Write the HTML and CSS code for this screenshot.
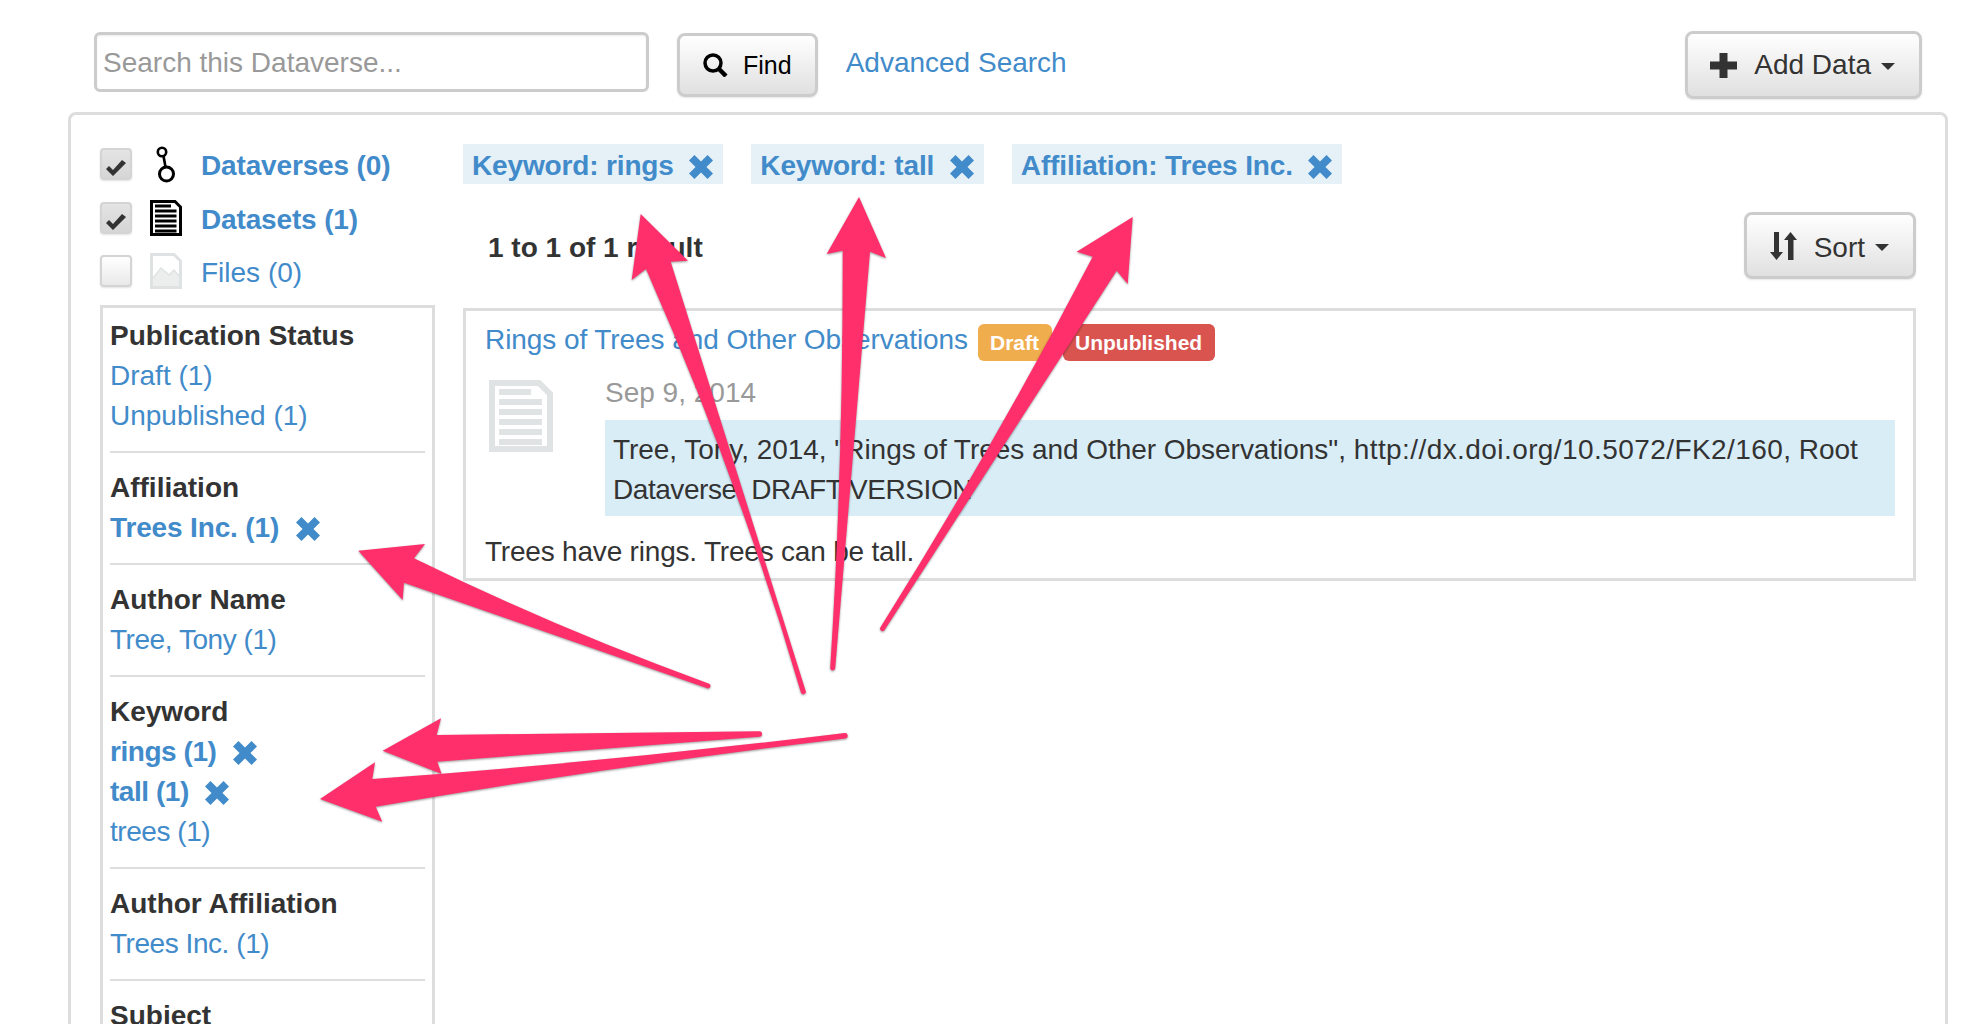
FILE: index.html
```html
<!DOCTYPE html>
<html lang="en">
<head>
  <meta charset="UTF-8">
  <meta name="viewport" content="width=device-width, initial-scale=1.0">
  <title>Root Dataverse</title>
  <link rel="stylesheet" href="styles.css">
</head>
<body>
  <svg class="icon-defs">
    <symbol id="icon-remove" viewBox="1 1 22 22">
      <path d="M6 1 L12 7 18 1 23 6 17 12 23 18 18 23 12 17 6 23 1 18 7 12 1 6Z"/>
    </symbol>
    <symbol id="icon-check" viewBox="0 0 20 16">
      <path d="M0 9 L3 6 7 10 16 0 20 3 7 16Z"/>
    </symbol>
    <symbol id="icon-doc" viewBox="0 0 64 72">
      <path d="M3 3 H50 L61 14 V69 H3Z" fill="#fff" stroke="currentColor" stroke-width="6"/>
      <path d="M10 10 H42 V16 H10Z M10 20 H53 V26 H10Z M10 30 H53 V36 H10Z M10 40 H53 V46 H10Z M10 50 H53 V56 H10Z M10 60 H53 V66 H10Z" fill="currentColor" transform="translate(0 -1)"/>
    </symbol>
  </svg>

  <div class="topbar">
    <input class="search-input" type="text" placeholder="Search this Dataverse...">
    <button class="btn btn-find">
      <svg class="icon-search" viewBox="0 0 25 24" width="25" height="24">
        <circle cx="10" cy="10" r="8" fill="none" stroke="#000" stroke-width="3.5"/>
        <path d="M15.5 15.5 L23 23" stroke="#000" stroke-width="4.5"/>
      </svg>
      Find
    </button>
    <a class="advanced-link" href="#">Advanced Search</a>
    <button class="btn btn-add">
      <svg viewBox="0 0 27 25" width="27" height="25">
        <path d="M9.5 0 H17.5 V8.5 H27 V16.5 H17.5 V25 H9.5 V16.5 H0 V8.5 H9.5Z" fill="#333"/>
      </svg>
      <span>Add Data</span>
      <span class="caret"></span>
    </button>
  </div>

  <div class="panel">
    <div class="side">
      <div class="type-row">
        <span class="check is-on"><svg width="20" height="16"><use href="#icon-check"/></svg></span>
        <svg class="type-icon" viewBox="0 0 32 40" width="32" height="40">
          <circle cx="12" cy="8" r="4.2" fill="none" stroke="#000" stroke-width="2.6"/>
          <path d="M13.5 12 L15.5 23" stroke="#000" stroke-width="2.6"/>
          <circle cx="16.5" cy="30" r="7" fill="none" stroke="#000" stroke-width="3"/>
        </svg>
        <a class="link-bold" href="#">Dataverses (0)</a>
      </div>
      <div class="type-row">
        <span class="check is-on"><svg width="20" height="16"><use href="#icon-check"/></svg></span>
        <svg class="type-icon icon-black" width="32" height="36"><use href="#icon-doc"/></svg>
        <a class="link-bold" href="#">Datasets (1)</a>
      </div>
      <div class="type-row">
        <span class="check"></span>
        <svg class="type-icon" viewBox="0 0 32 36" width="32" height="36">
          <path d="M1.5 1.5 H24 L30.5 8 V34.5 H1.5Z" fill="#fff" stroke="#dfe2e2" stroke-width="3"/>
          <path d="M3 25 L11 15 L19 22 L24 17 L29 23 V33 H3Z" fill="#eceeee"/>
          <path d="M3 25 L11 15 L19 22 L24 17 L29 23" fill="none" stroke="#dfe2e2" stroke-width="1.5"/>
        </svg>
        <a href="#">Files (0)</a>
      </div>

      <div class="facets">
        <div class="facet">
          <h5>Publication Status</h5>
          <a href="#">Draft (1)</a>
          <a href="#">Unpublished (1)</a>
        </div>
        <div class="facet">
          <h5>Affiliation</h5>
          <a class="link-bold" href="#">Trees Inc. (1) <svg class="remove" width="24" height="24"><use href="#icon-remove"/></svg></a>
        </div>
        <div class="facet">
          <h5>Author Name</h5>
          <a class="tight" href="#">Tree, Tony (1)</a>
        </div>
        <div class="facet">
          <h5>Keyword</h5>
          <a class="link-bold tight" href="#">rings (1) <svg class="remove" width="24" height="24"><use href="#icon-remove"/></svg></a>
          <a class="link-bold tight" href="#">tall (1) <svg class="remove" width="24" height="24"><use href="#icon-remove"/></svg></a>
          <a class="tight" href="#">trees (1)</a>
        </div>
        <div class="facet">
          <h5>Author Affiliation</h5>
          <a class="tight" href="#">Trees Inc. (1)</a>
        </div>
        <div class="facet">
          <h5>Subject</h5>
        </div>
      </div>
    </div>

    <div class="main">
      <div class="chips">
        <a class="chip" href="#">Keyword: rings <svg class="remove" width="24" height="24"><use href="#icon-remove"/></svg></a>
        <a class="chip" href="#">Keyword: tall <svg class="remove" width="24" height="24"><use href="#icon-remove"/></svg></a>
        <a class="chip" href="#">Affiliation: Trees Inc. <svg class="remove" width="24" height="24"><use href="#icon-remove"/></svg></a>
      </div>

      <div class="result-head">
        <strong>1 to 1 of 1 result</strong>
        <button class="btn btn-sort">
          <svg viewBox="0 0 27 28" width="27" height="28">
            <path d="M4 0 H9 V20 H13 L6.5 28 L0 20 H4Z M18 28 V8 H14 L20.5 0 L27 8 H23.5 V28Z" fill="#333"/>
          </svg>
          <span class="sort-label">Sort</span>
          <span class="caret"></span>
        </button>
      </div>

      <div class="card">
        <div class="card-title">
          <a href="#">Rings of Trees and Other Observations</a>
          <span class="badge badge-draft">Draft</span>
          <span class="badge badge-unpub">Unpublished</span>
        </div>
        <div class="card-body">
          <svg class="icon-big" width="64" height="72"><use href="#icon-doc"/></svg>
          <div class="card-meta">
            <div class="date">Sep 9, 2014</div>
            <div class="citation">Tree, Tony, 2014, "Rings of Trees and Other Observations", <span class="url">http://dx.doi.org/10.5072/FK2/160</span>, Root <span class="tight">Dataverse, DRAFT VERSION</span></div>
          </div>
        </div>
        <p class="desc">Trees have rings. Trees can be tall.</p>
      </div>
    </div>
  </div>

  <!-- callout arrows drawn on top of the screenshot -->
  <svg class="arrows" width="1978" height="1024" viewBox="0 0 1978 1024">
    <path d="M640.7 214 L688 260.7 670.7 261.7 L805.7 690.9 A2.5 2.5 0 0 1 800.9 692.5 Q739 480 646 269 L631.7 280Z"/>
    <path d="M859 197 L886 258 870 251.7 L835.2 668.1 A2.5 2.5 0 0 1 830.2 667.9 Q843 470 842.7 250.7 L826.7 254Z"/>
    <path d="M1132.7 217 L1127.7 284 1116.7 270.7 L884.4 630.3 A2.5 2.5 0 0 1 880.2 627.7 Q996.5 442 1092.7 256.7 L1076.7 251.7Z"/>
    <path d="M358.3 550.7 L425 544 414 558.3 Q558 629 709.2 683.7 A2.5 2.5 0 0 1 707.4 688.3 L404 582.7 L402.7 600Z"/>
    <path d="M382.7 750.7 L441 718.3 436.7 735 L759.3 731.3 A2.7 2.7 0 0 1 759.3 736.7 L437.3 761.7 L441.7 774Z"/>
    <path d="M320 799 L375 762.3 372.3 779 Q608 762 844.7 733 A2.7 2.7 0 0 1 845.3 738.4 Q610 766.5 375.7 806.7 L382.3 821.7Z"/>
  </svg>
</body>
</html>
```

FILE: styles.css
```css
html, body {
  height: 100%;
  overflow: hidden;
}
body {
  position: relative;
  margin: 0;
  font-family: "Liberation Sans", Arial, sans-serif;
  font-size: 28px;
  line-height: 40px;
  font-kerning: normal;
  text-rendering: optimizeLegibility;
  color: #333;
  background: #fff;
}
a {
  color: #428bca;
  text-decoration: none;
}
.icon-defs {
  display: none;
}

/* top bar */
.topbar {
  display: flex;
  align-items: flex-start;
  box-sizing: border-box;
  height: 112px;
  padding: 31px 56px 0 94px;
}
.search-input {
  width: 555px;
  height: 60px;
  margin-top: 1px;
  padding: 2px 6px 0;
  box-sizing: border-box;
  border: 3px solid #ccc;
  border-radius: 6px;
  box-shadow: inset 0 1px 2px rgba(0, 0, 0, 0.08);
  font-family: inherit;
  font-size: 28px;
  color: #333;
  outline: none;
}
.search-input::placeholder {
  color: #999;
  opacity: 1;
}
.btn {
  display: inline-flex;
  align-items: center;
  box-sizing: border-box;
  padding: 0 23px;
  border: 3px solid #ccc;
  border-radius: 8px;
  background: linear-gradient(#fff, #e0e0e0);
  box-shadow: 0 1px 2px rgba(0, 0, 0, 0.1);
  font-family: inherit;
  font-size: 28px;
  color: #333;
}
.btn-find {
  gap: 15px;
  height: 64px;
  margin: 2px 28px 0;
  font-size: 25px;
  color: #000;
}
.advanced-link {
  margin-top: 12px;
}
.btn-add {
  height: 68px;
  margin-left: auto;
  padding: 0 24px 0 22px;
}
.btn-add svg,
.btn-sort svg {
  margin-right: 17px;
}
.caret {
  width: 0;
  height: 0;
  margin-left: 10px;
  margin-top: 3px;
  border-top: 7px solid #333;
  border-left: 7px solid transparent;
  border-right: 7px solid transparent;
}

/* main panel */
.panel {
  display: flex;
  gap: 28px;
  margin: 0 30px 0 68px;
  padding: 29px 29px 0 29px;
  border: 3px solid #ddd;
  border-radius: 8px;
}
.side {
  display: flex;
  flex-direction: column;
  gap: 13.5px;
  width: 335px;
  flex-shrink: 0;
}
.type-row {
  display: flex;
  align-items: center;
  height: 40px;
}
.type-row a {
  padding-top: 4px;
}
.check {
  display: flex;
  align-items: center;
  justify-content: center;
  width: 32px;
  height: 32px;
  box-sizing: border-box;
  margin-right: 18px;
  padding-top: 8px;
  border: 2px solid #d4d4d4;
  border-radius: 4px;
  background: linear-gradient(#fff, #e9e9e9);
  box-shadow: 0 1px 2px rgba(0, 0, 0, 0.12);
}
.check.is-on {
  background: linear-gradient(#e4e4e4, #d6d6d6);
  fill: #333;
}
.type-icon {
  margin-right: 19px;
  flex-shrink: 0;
}
.icon-black {
  color: #000;
}
.link-bold {
  font-weight: bold;
  letter-spacing: -0.15px;
  fill: #428bca;
}
.tight {
  letter-spacing: -0.45px;
}

/* facets */
.facets {
  border: 3px solid #ddd;
  padding: 8px 7px 0 7px;
}
.facet {
  padding: 0 0 15px;
  margin-bottom: 15px;
  border-bottom: 2px solid #ddd;
}
.facet:last-child {
  border-bottom: none;
}
.facet h5 {
  margin: 0;
  font-size: 28px;
  font-weight: bold;
}
.facet a {
  display: block;
}
.remove {
  margin-left: 9px;
  vertical-align: -4px;
  fill: #428bca;
}

/* results */
.main {
  flex: 1;
}
.chips {
  display: flex;
  gap: 28px;
}
.chip {
  padding: 4px 10px 0 9px;
  line-height: 36px;
  background: #e5f1f7;
  font-weight: bold;
  letter-spacing: -0.15px;
}
.chip .remove {
  margin-left: 8px;
}
.result-head {
  display: flex;
  justify-content: space-between;
  margin-top: 28px;
  padding-left: 25px;
  align-items: center;
}
.result-head strong {
  padding-top: 4px;
}
.btn-sort {
  height: 67px;
  padding: 0 24px 0 23px;
}
.sort-label {
  padding-top: 4px;
}
.card {
  margin-top: 29px;
  padding: 7px 18px 6px 19px;
  border: 3px solid #ddd;
}
.card-title {
  display: flex;
  align-items: flex-start;
  height: 40px;
}
.card-title a {
  padding-top: 4px;
  line-height: 36px;
  letter-spacing: -0.07px;
}
.badge {
  height: 37px;
  padding: 0 13px 0 12px;
  margin-top: 6px;
  border-radius: 6px;
  font-size: 21px;
  line-height: 37px;
  font-weight: bold;
  color: #fff;
}
.badge-draft {
  margin-left: 10px;
  background: #f0ad4e;
}
.badge-unpub {
  margin-left: 11px;
  background: #d9534f;
}
.card-body {
  display: flex;
  margin-top: 15px;
}
.icon-big {
  flex-shrink: 0;
  margin: 7px 52px 0 4px;
  color: #e0e3e3;
}
.card-meta {
  flex: 1;
}
.date {
  color: #999;
}
.citation {
  margin-top: 7px;
  padding: 10px 8px 6px;
  background: #d9edf7;
  letter-spacing: -0.04px;
}
.url {
  letter-spacing: 0.42px;
}
.desc {
  margin: 16px 0 0;
  letter-spacing: -0.2px;
}

/* annotation overlay */
.arrows {
  position: absolute;
  top: 0;
  left: 0;
  pointer-events: none;
  fill: #ff2f6b;
  filter: drop-shadow(0 1px 1px rgba(0, 0, 0, 0.4));
}
```
